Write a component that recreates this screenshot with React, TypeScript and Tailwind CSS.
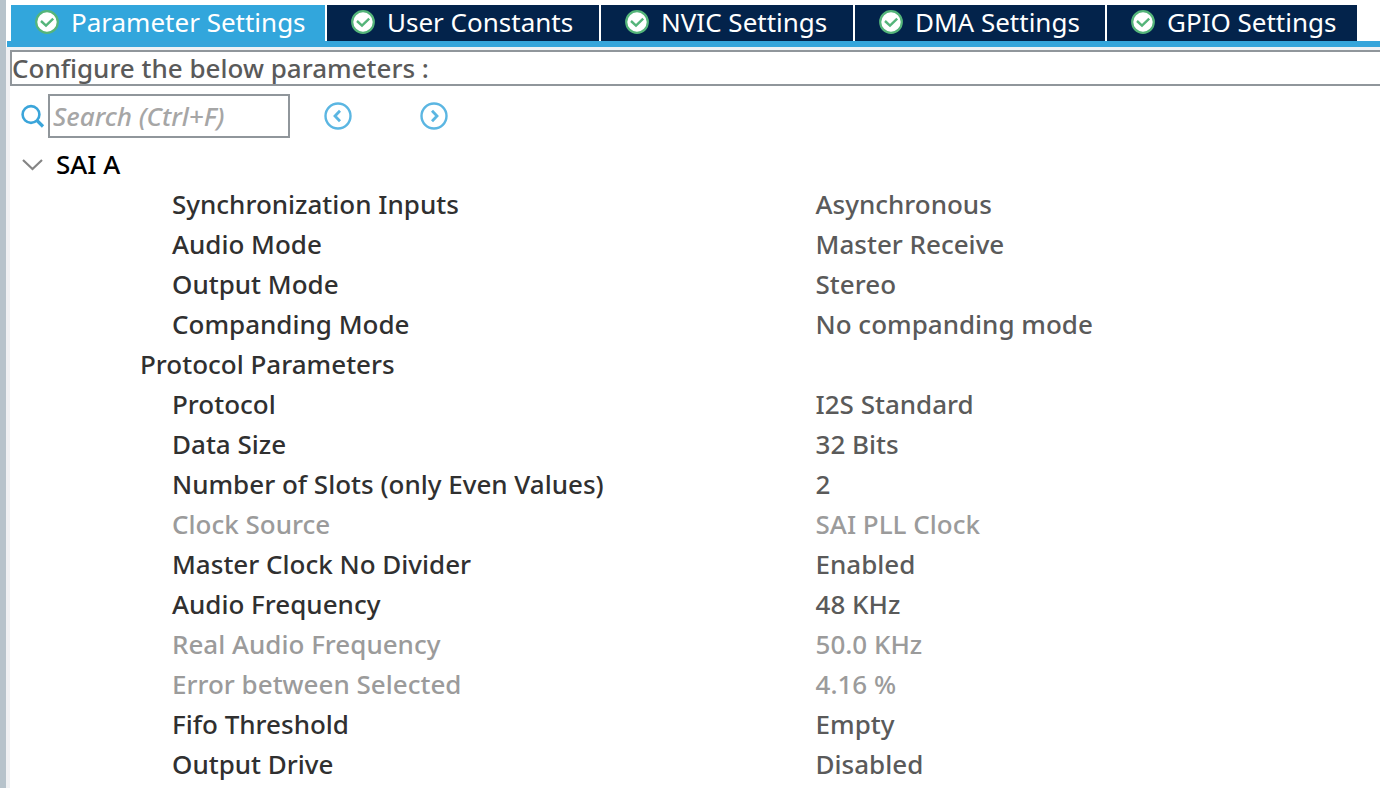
import { useState } from "react";

type Parameter = { name: string; value: string; disabled?: boolean };

const tabs = [
  { label: "Parameter Settings", width: "w-[316px]" },
  { label: "User Constants", width: "w-[274px]" },
  { label: "NVIC Settings", width: "w-[254px]" },
  { label: "DMA Settings", width: "w-[252px]" },
  { label: "GPIO Settings", width: "w-[252px]" },
];

const generalParameters: Parameter[] = [
  { name: "Synchronization Inputs", value: "Asynchronous" },
  { name: "Audio Mode", value: "Master Receive" },
  { name: "Output Mode", value: "Stereo" },
  { name: "Companding Mode", value: "No companding mode" },
];

const protocolParameters: Parameter[] = [
  { name: "Protocol", value: "I2S Standard" },
  { name: "Data Size", value: "32 Bits" },
  { name: "Number of Slots (only Even Values)", value: "2" },
  { name: "Clock Source", value: "SAI PLL Clock", disabled: true },
  { name: "Master Clock No Divider", value: "Enabled" },
  { name: "Audio Frequency", value: "48 KHz" },
  { name: "Real Audio Frequency", value: "50.0 KHz", disabled: true },
  { name: "Error between Selected", value: "4.16 %", disabled: true },
  { name: "Fifo Threshold", value: "Empty" },
  { name: "Output Drive", value: "Disabled" },
];

function CheckBadge() {
  return (
    <svg className="size-6 shrink-0" viewBox="0 0 24 24" fill="none" aria-hidden="true">
      <circle cx="12" cy="12" r="10.8" fill="#fff" stroke="#55b57a" strokeWidth="2.2" />
      <path d="M6 11 11 15.6 18.2 8.6" stroke="#55b57a" strokeWidth="2.4" />
    </svg>
  );
}

function SearchIcon() {
  return (
    <svg className="size-6 shrink-0" viewBox="0 0 24 24" fill="none" stroke="#3ba5da" aria-hidden="true">
      <circle cx="10" cy="10.5" r="8.4" strokeWidth="2.6" />
      <path d="M16 16.5 22 22.5" strokeWidth="3.2" />
    </svg>
  );
}

function CircleArrow({ direction }: { direction: "left" | "right" }) {
  return (
    <svg className="size-7" viewBox="0 0 28 28" fill="none" stroke="#5bb6e2" aria-hidden="true">
      <circle cx="14" cy="14" r="12.5" strokeWidth="2.4" />
      <path d={direction === "left" ? "M16 8.8 11 14 16 19.2" : "M12 8.8 17 14 12 19.2"} strokeWidth="2.8" />
    </svg>
  );
}

function ParameterRows({ rows }: { rows: Parameter[] }) {
  return rows.map((row) => (
    <tr key={row.name} className="h-10">
      <th
        scope="row"
        className={`pb-0.5 pl-[162px] text-left font-medium ${row.disabled ? "text-[#9b9b9b]" : "text-[#303030]"}`}
      >
        {row.name}
      </th>
      <td className={`pb-0.5 ${row.disabled ? "text-[#9b9b9b]" : "text-[#5a5a5a]"}`}>{row.value}</td>
    </tr>
  ));
}

export default function App() {
  const [active, setActive] = useState(0);
  const [open, setOpen] = useState(true);
  const [query, setQuery] = useState("");

  return (
    <div className="flex min-h-screen flex-col overflow-x-hidden border-l-[6px] border-[#b7c3cb] bg-white pt-[5px] font-['Noto_Sans','Open_Sans',sans-serif] text-[26px] leading-9 font-medium whitespace-nowrap">
      <div role="tablist" className="ml-px flex border-b-[6px] border-[#35a5db] pl-1">
        {tabs.map((tab, index) => (
          <button
            key={tab.label}
            type="button"
            role="tab"
            aria-selected={active === index}
            onClick={() => setActive(index)}
            className={`flex h-9 shrink-0 items-center gap-3 border-r-2 border-white pb-0.5 pl-6 font-normal text-white ${tab.width} ${
              active === index ? "bg-[#32a6dc]" : "bg-[#03234b]"
            }`}
          >
            <CheckBadge />
            {tab.label}
          </button>
        ))}
      </div>

      <main className="flex-1 border-l-4 border-[#f0f1f3]">
        <div className="h-[3px] bg-[#eff2f5]" />
        <p className="h-9 border-y-2 border-l-2 border-[#90969b] leading-8 text-[#5a5a5a]">
          Configure the below parameters :
        </p>

        <div className="flex items-center pt-2 pl-[11px]">
          <label className="flex items-center gap-[3px]">
            <SearchIcon />
            <input
              type="text"
              aria-label="Search"
              placeholder="Search (Ctrl+F)"
              value={query}
              onChange={(event) => setQuery(event.target.value)}
              className="h-11 w-[242px] border-2 border-[#90969b] px-[3px] text-[#303030] outline-none placeholder:text-[#a6a6a6] placeholder:italic"
            />
          </label>
          <div className="flex gap-[68px] pl-[34px]">
            <button type="button" aria-label="Previous match">
              <CircleArrow direction="left" />
            </button>
            <button type="button" aria-label="Next match">
              <CircleArrow direction="right" />
            </button>
          </div>
        </div>

        <table className="mt-[7px] w-full table-fixed border-collapse">
          <colgroup>
            <col className="w-[58.8%]" />
            <col />
          </colgroup>
          <tbody>
            <tr className="h-10">
              <th scope="rowgroup" colSpan={2} className="pb-0.5 pl-3 text-left font-medium text-black">
                <button
                  type="button"
                  aria-expanded={open}
                  onClick={() => setOpen(!open)}
                  className="flex items-center gap-3"
                >
                  <svg className="h-4 w-[22px]" viewBox="0 0 22 16" fill="none" stroke="#858585" aria-hidden="true">
                    <path d="M1 4 10.5 13 20 4" strokeWidth="2.2" />
                  </svg>
                  SAI A
                </button>
              </th>
            </tr>
            {open && (
              <>
                <ParameterRows rows={generalParameters} />
                <tr className="h-10">
                  <th scope="rowgroup" colSpan={2} className="pb-0.5 pl-[130px] text-left font-medium text-[#303030]">
                    Protocol Parameters
                  </th>
                </tr>
                <ParameterRows rows={protocolParameters} />
              </>
            )}
          </tbody>
        </table>
      </main>
    </div>
  );
}
